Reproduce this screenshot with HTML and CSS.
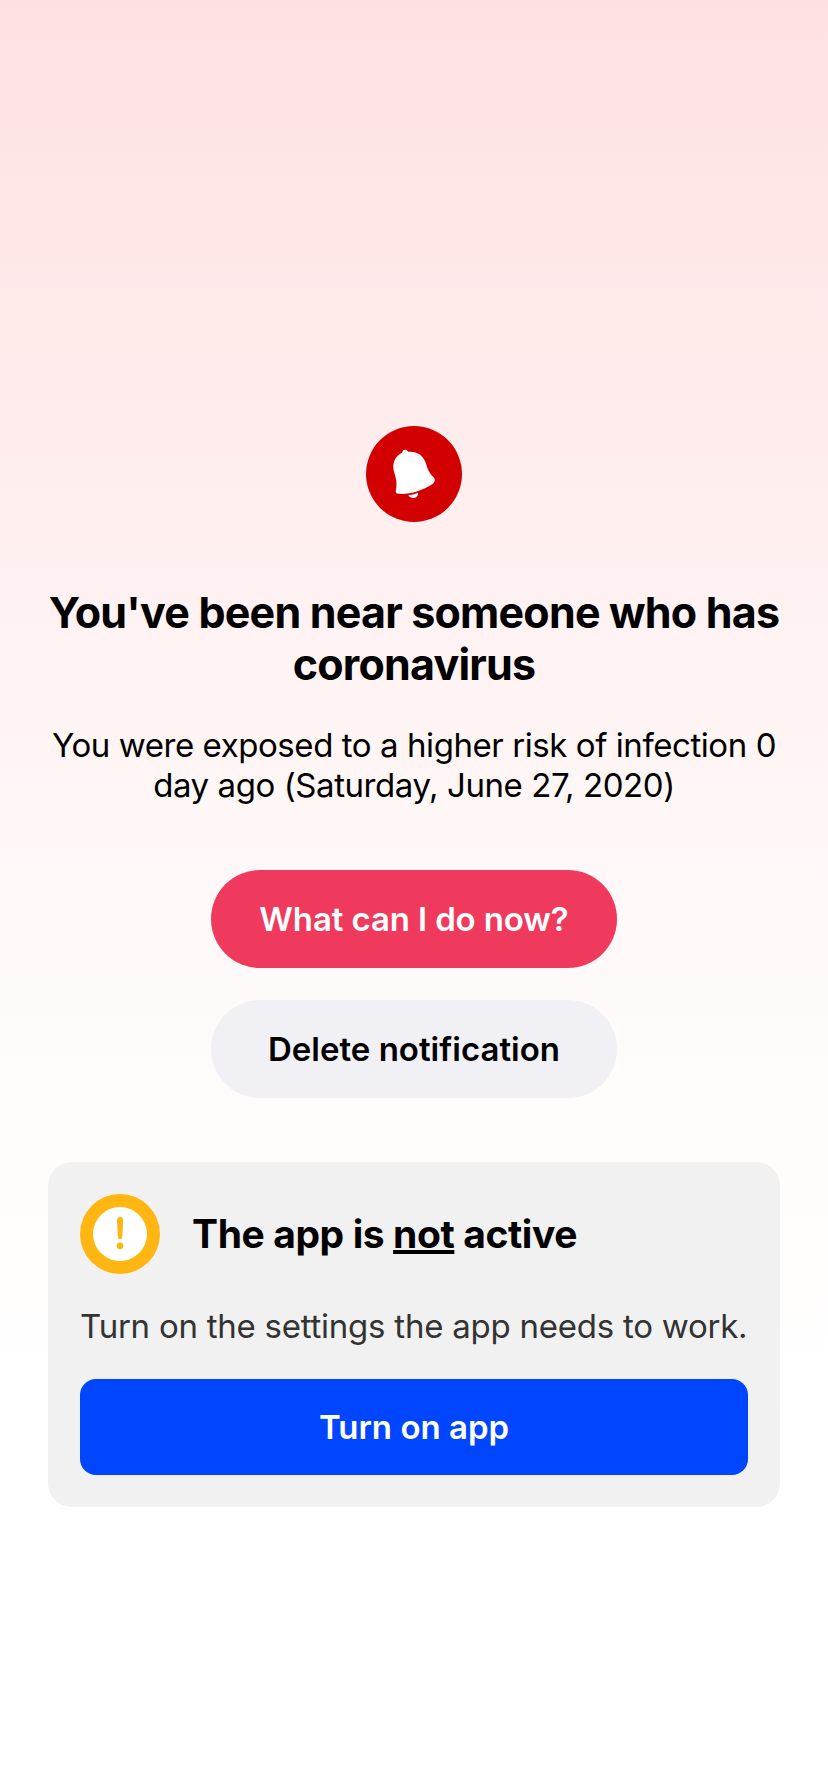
FILE: index.html
```
<!DOCTYPE html>
<html lang="en">
<head>
<meta charset="utf-8">
<title>Exposure notification</title>
<link rel="stylesheet" href="styles.css">
</head>
<body>
<main class="screen">
  <svg class="bell" viewBox="0 0 96 96" aria-hidden="true">
    <circle cx="48" cy="48" r="48" fill="#d20000"/>
    <path d="M36.5 26.2C36.4 23.5 40.5 22.8 42 25.8C50.5 24.9 57 29 59.6 36.5C61.7 43.1 62.5 46 67.6 51.3C69.6 53.4 68.9 56.4 66.3 58.2C56.2 64.5 44.5 68.5 32.5 67.8C30.2 67.7 29.3 66.2 29.9 64C31.2 57.5 30.4 53.8 28.4 47C25.8 38.5 27.8 31 36.5 26.2Z" fill="#fff"/>
    <path d="M42.3 69.3Q47.5 69 52 66.8C52.6 70 50.3 72 47.5 72C45.2 72 43.5 71 42.3 69.3Z" fill="#fff"/>
  </svg>
  <h1 class="title">You've been near someone who has<br>coronavirus</h1>
  <p class="body">You were exposed to a higher risk of infection 0<br>day ago (Saturday, June 27, 2020)</p>
  <div class="actions">
    <button class="pill pill-primary">What can I do now?</button>
    <button class="pill pill-secondary">Delete notification</button>
  </div>
  <section class="card">
    <div class="card-head">
      <svg class="warn" viewBox="0 0 80 80" aria-hidden="true">
        <circle cx="40" cy="40" r="40" fill="#ffb612"/>
        <circle cx="40" cy="40" r="27" fill="#fff"/>
        <path d="M37 26.2a3.1 3.1 0 0 1 6.2 0L42.3 43a2.2 2.2 0 0 1-4.4 0Z" fill="#ffb612"/>
        <circle cx="40" cy="51.8" r="3.4" fill="#ffb612"/>
      </svg>
      <h2 class="card-title">The app is <span class="under">not</span> active</h2>
    </div>
    <p class="card-text">Turn on the settings the app needs to work.</p>
    <button class="cta">Turn on app</button>
  </section>
</main>
</body>
</html>
```
FILE: styles.css
```
* { box-sizing: border-box; margin: 0; padding: 0; }
body {
  font-family: Inter, "Liberation Sans", sans-serif;
  color: #000;
}
.screen {
  min-height: 1792px;
  padding: 426px 48px 0;
  display: flex;
  flex-direction: column;
  align-items: center;
  background: linear-gradient(#ffe0e2 0, #ffecec 414px, #fff2f2 620px, #fff7f7 840px, #fffafa 1000px, #fffdfc 1160px, #fff 1450px);
}
.bell { width: 96px; height: 96px; }
.title {
  margin-top: 64px;
  font-size: 43px;
  line-height: 52px;
  font-weight: 700;
  letter-spacing: -0.8px;
  text-align: center;
  white-space: nowrap;
}
.body {
  margin-top: 35px;
  font-size: 33px;
  line-height: 40px;
  letter-spacing: -0.43px;
  text-align: center;
  white-space: nowrap;
}
.actions {
  margin-top: 65px;
  display: flex;
  flex-direction: column;
  gap: 32px;
}
.pill {
  width: 406px;
  height: 98px;
  border: 0;
  border-radius: 49px;
  font: 600 33px/40px Inter, "Liberation Sans", sans-serif;
}
.pill-primary { background: #ef3a5d; color: #fff; letter-spacing: -0.13px; }
.pill-secondary { background: #f1f0f5; color: #000; }
.card {
  width: 732px;
  height: 345px;
  margin-top: 64px;
  padding: 32px;
  border-radius: 24px;
  background: #f1f1f1;
}
.card-head {
  display: flex;
  align-items: center;
  gap: 32px;
}
.warn { width: 80px; height: 80px; }
.card-title {
  font-size: 39px;
  line-height: 48px;
  font-weight: 700;
  letter-spacing: -0.4px;
  white-space: nowrap;
}
.under {
  text-decoration: underline;
  text-decoration-thickness: 4px;
  text-underline-offset: 2px;
  text-decoration-skip-ink: none;
}
.card-text {
  margin-top: 32px;
  font-size: 33px;
  line-height: 40px;
  letter-spacing: -0.24px;
  color: #333;
  white-space: nowrap;
}
.cta {
  width: 100%;
  height: 96px;
  margin-top: 33px;
  border: 0;
  border-radius: 16px;
  background: #0046ff;
  color: #fff;
  font: 600 33px/40px Inter, "Liberation Sans", sans-serif;
}
```
